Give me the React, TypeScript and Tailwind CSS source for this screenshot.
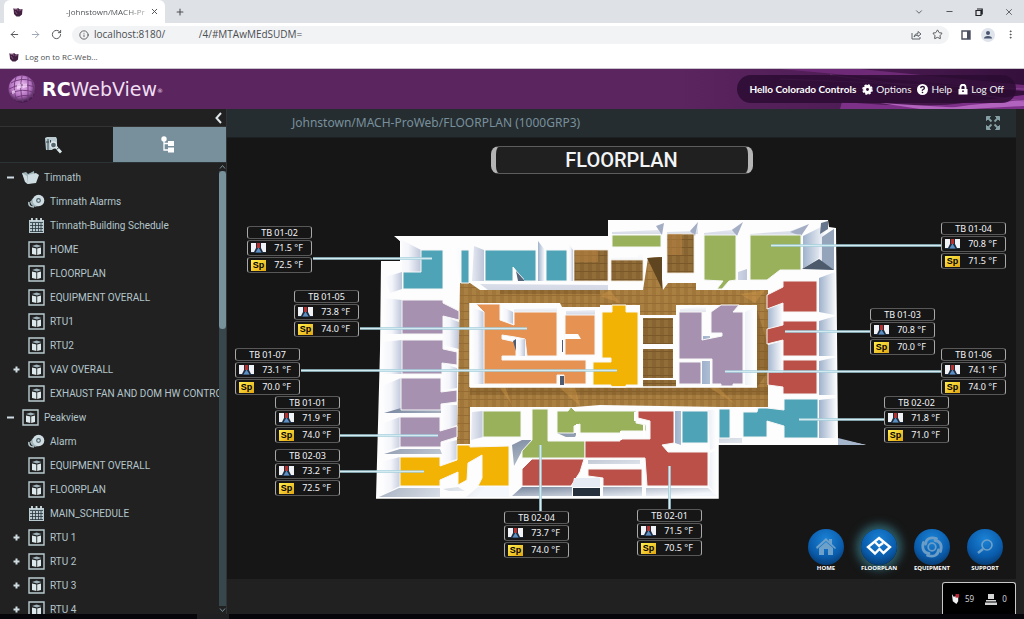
import type { ReactNode } from "react";
import {
  ArrowLeft,
  ArrowRight,
  ChevronDown,
  Info,
  Minus,
  MoreVertical,
  Plus,
  RotateCw,
  Star,
  X,
} from "lucide-react";

type IconKind = "folder" | "alarm" | "schedule" | "page";

interface TreeItem {
  label: string;
  icon: IconKind;
  level: 0 | 1;
  toggle?: "open" | "closed";
}

const TREE: TreeItem[] = [
  { label: "Timnath", icon: "folder", level: 0, toggle: "open" },
  { label: "Timnath Alarms", icon: "alarm", level: 1 },
  { label: "Timnath-Building Schedule", icon: "schedule", level: 1 },
  { label: "HOME", icon: "page", level: 1 },
  { label: "FLOORPLAN", icon: "page", level: 1 },
  { label: "EQUIPMENT OVERALL", icon: "page", level: 1 },
  { label: "RTU1", icon: "page", level: 1 },
  { label: "RTU2", icon: "page", level: 1 },
  { label: "VAV OVERALL", icon: "page", level: 1, toggle: "closed" },
  { label: "EXHAUST FAN AND DOM HW CONTROL", icon: "page", level: 1 },
  { label: "Peakview", icon: "page", level: 0, toggle: "open" },
  { label: "Alarm", icon: "alarm", level: 1 },
  { label: "EQUIPMENT OVERALL", icon: "page", level: 1 },
  { label: "FLOORPLAN", icon: "page", level: 1 },
  { label: "MAIN_SCHEDULE", icon: "schedule", level: 1 },
  { label: "RTU 1", icon: "page", level: 1, toggle: "closed" },
  { label: "RTU 2", icon: "page", level: 1, toggle: "closed" },
  { label: "RTU 3", icon: "page", level: 1, toggle: "closed" },
  { label: "RTU 4", icon: "page", level: 1, toggle: "closed" },
];

interface Zone {
  name: string;
  temp: string;
  setpoint: string;
  place: string;
}

// Zone tags are pinned on the graphic, relative to its top-left corner
const ZONES: Zone[] = [
  { name: "TB 01-02", temp: "71.5 °F", setpoint: "72.5 °F", place: "left-[20px] top-[88px]" },
  { name: "TB 01-05", temp: "73.8 °F", setpoint: "74.0 °F", place: "left-[67px] top-[152px]" },
  { name: "TB 01-07", temp: "73.1 °F", setpoint: "70.0 °F", place: "left-[8px] top-[210px]" },
  { name: "TB 01-01", temp: "71.9 °F", setpoint: "74.0 °F", place: "left-[48px] top-[258px]" },
  { name: "TB 02-03", temp: "73.2 °F", setpoint: "72.5 °F", place: "left-[48px] top-[311px]" },
  { name: "TB 02-04", temp: "73.7 °F", setpoint: "74.0 °F", place: "left-[277px] top-[373px]" },
  { name: "TB 02-01", temp: "71.5 °F", setpoint: "70.5 °F", place: "left-[410px] top-[371px]" },
  { name: "TB 01-04", temp: "70.8 °F", setpoint: "71.5 °F", place: "left-[714px] top-[84px]" },
  { name: "TB 01-03", temp: "70.8 °F", setpoint: "70.0 °F", place: "left-[643px] top-[170px]" },
  { name: "TB 01-06", temp: "74.1 °F", setpoint: "74.0 °F", place: "left-[714px] top-[210px]" },
  { name: "TB 02-02", temp: "71.8 °F", setpoint: "71.0 °F", place: "left-[657px] top-[258px]" },
];

function TreeIcon({ kind }: { kind: IconKind }) {
  if (kind === "folder") {
    return (
      <svg viewBox="0 0 17 17" className="h-[17px] w-[17px] shrink-0" fill="#cfdde2">
        <path d="M0 4 L4 3 L6 5 L12 2 L13 13 L5 15 Z" fill="#9fb3ba" />
        <path d="M0 4 L5 7 L6 15 L3 13 Z" />
        <path d="M6 6 L14 4 L17 6 L14 14 L6 15 Z" />
      </svg>
    );
  }
  if (kind === "alarm") {
    return (
      <svg viewBox="0 0 17 17" className="h-[17px] w-[17px] shrink-0">
        <path d="M1 9 Q0 14 6 14 M3 8 Q3 12 8 13" fill="none" stroke="#b5c6cc" strokeWidth="1.6" />
        <ellipse cx="8" cy="9" rx="5" ry="4.5" fill="#9fb3ba" />
        <circle cx="10.5" cy="7.5" r="5.8" fill="#cfdde2" />
        <circle cx="10.5" cy="7.5" r="2.4" fill="#4d626b" />
        <circle cx="10.5" cy="7.5" r="1.2" fill="#cfdde2" />
      </svg>
    );
  }
  if (kind === "schedule") {
    return (
      <svg viewBox="0 0 17 17" className="h-[17px] w-[17px] shrink-0">
        <path d="M1 3h15v13H1z" fill="#b9cbd1" />
        <path d="M4 1v3M8.5 1v3M13 1v3" stroke="#cfdde2" strokeWidth="1.8" />
        <path
          d="M2 5.5h13M2 8.5h13M2 11.5h13M2 14.5h13M4.5 6v9M7.5 6v9M10.5 6v9M13 6v9"
          stroke="#26343a"
          strokeWidth="0.8"
        />
      </svg>
    );
  }
  return (
    <svg viewBox="0 0 17 17" className="h-[17px] w-[17px] shrink-0">
      <path d="M1 1h15v15H1z" fill="none" stroke="#b9cbd1" strokeWidth="1.4" />
      <path d="M4 5 L8.500 3.500 L13.500 5 L9 6.500 Z" fill="#9fb3ba" />
      <path d="M4 6.5 L8.300 7.5 V14 L4 13 Z M9.200 7.5 L13 6.5 V13 L9.200 14 Z" fill="#dce8ec" />
    </svg>
  );
}

function TreeToggle({ state, label }: { state?: "open" | "closed"; label: string }) {
  if (!state) return <span className="w-[15px] shrink-0" />;
  return (
    <button type="button" aria-label={`Toggle ${label}`} className="flex w-[15px] shrink-0 items-center">
      <svg viewBox="0 0 7 7" className="h-[7px] w-[7px]" stroke="#cfdde2" strokeWidth="2">
        <path d={state === "open" ? "M0 3.5h7" : "M0.500 3.5h6M3.5 0.500v6"} />
      </svg>
    </button>
  );
}

function Favicon() {
  return (
    <svg viewBox="0 0 10 10" className="h-[10px] w-[10px] shrink-0">
      <path d="M0.500 1.500 3 2.500 5 1 7 2.500 9.500 2 9 7.500 6.500 9.500h-3L1 7Z" fill="#42203f" />
      <path d="M0 2h4l1 2M9 2.5 6 4M2 4l2 3" stroke="#8b5a86" strokeWidth="0.8" fill="none" />
    </svg>
  );
}

function BrowserChrome() {
  return (
    <div className="shrink-0 bg-white font-['Open_Sans',sans-serif] text-[10px] text-[#4a4d51]">
      <div className="flex h-[23px] items-center bg-[#dee1e6] pl-1">
        <div className="flex h-full w-[161px] items-center rounded-t-md bg-white pr-1.5 pl-[9px]">
          <Favicon />
          <span className="ml-[43px] flex-1 whitespace-nowrap bg-linear-to-r from-[#4a4d51] from-70% to-[#d0d0d0] bg-clip-text text-[8px] text-transparent">
            -Johnstown/MACH-Pr
          </span>
          <button type="button" aria-label="Close tab">
            <X size={9} strokeWidth={2.5} />
          </button>
        </div>
        <button type="button" aria-label="New tab" className="ml-2.5">
          <Plus size={10} strokeWidth={2.5} />
        </button>
        <div className="ml-auto flex items-center gap-[21px] pr-[10px]">
          <ChevronDown size={10} />
          <Minus size={9} strokeWidth={2.5} />
          <svg viewBox="0 0 8 8" className="h-2 w-2" fill="none" stroke="#202124" strokeWidth="1.2">
            <path d="M1 2.5h5v5H1zM2 1h5.2v5.5" />
          </svg>
          <X size={10} />
        </div>
      </div>
      <div className="flex h-[23px] items-center">
        <div className="flex w-[72px] items-center gap-[10px] pl-[9px]">
          <ArrowLeft size={11} />
          <ArrowRight size={11} className="text-gray-400" />
          <RotateCw size={11} />
        </div>
        <div className="flex h-[18px] flex-1 items-center rounded-full bg-[#f1f3f4] pr-1.5 pl-[7px]">
          <Info size={10} />
          <input
            aria-label="Address"
            readOnly
            value={"localhost:8180/" + "\u00a0".repeat(13) + "/4/#MTAwMEdSUDM="}
            className="ml-[5px] min-w-0 flex-1 bg-transparent outline-none"
          />
          <svg viewBox="0 0 11 10" className="h-[10px] w-[11px]" fill="none" stroke="#5f6368">
            <path d="M1 3v6h8V7M3 7Q3.500 3.500 7 3.500V1.500L10 4 7 6.500V5Q4.500 5 3 7Z" />
          </svg>
          <Star size={11} className="ml-[10px]" />
        </div>
        <div className="flex items-center gap-[10px] pr-[8px] pl-[12px]">
          <svg viewBox="0 0 10 10" className="h-[10px] w-[10px]">
            <path d="M1 1h8v8H1z" fill="none" stroke="#4a5060" strokeWidth="1.4" />
            <path d="M6 1h3v8H6z" fill="#4a5060" />
          </svg>
          <svg viewBox="0 0 14 14" className="h-[14px] w-[14px]">
            <circle cx="7" cy="7" r="7" fill="#dfe3ec" />
            <circle cx="7" cy="5" r="2" fill="#47566e" />
            <path d="M3 10.5Q3 8 7 8t4 2.5Z" fill="#47566e" />
          </svg>
          <MoreVertical size={11} />
        </div>
      </div>
      <div className="flex h-[23px] items-center border-b border-[#c9c4cc] pl-[9px]">
        <a href="#bookmark" className="flex items-center gap-[6px] text-[8px]">
          <Favicon />
          Log on to RC-Web...
        </a>
      </div>
    </div>
  );
}

function Globe() {
  return (
    <svg viewBox="0 0 28 28" className="h-7 w-7">
      <defs>
        <radialGradient id="globe" cx="0.45" cy="0.38" r="0.62">
          <stop offset="0" stopColor="#f0c4f7" />
          <stop offset="0.6" stopColor="#b573c2" />
          <stop offset="1" stopColor="#3b1642" />
        </radialGradient>
      </defs>
      <circle cx="14" cy="14" r="13.5" fill="url(#globe)" />
      <g fill="none" stroke="#6e3878" strokeWidth="0.9">
        <path d="M3 8Q13 2 24 6M1 14Q13 7 27 12M2 19Q14 12 27 18M5 24Q15 18 25 22" />
        <path d="M8 2Q4 13 9 26M14 1Q11 14 15 27M20 2Q20 14 20 26M24 5Q27 13 24 22" />
      </g>
      <path d="M9 10l4-1v4l-4 1ZM15 9l4-.5V12l-4 1ZM4 16l3-1v3l-3 1Z" fill="#f8dcfc" opacity="0.7" />
    </svg>
  );
}

function Header() {
  return (
    <header className="relative flex h-10 shrink-0 items-center justify-between overflow-hidden bg-[#5b255f] pr-2 pl-2">
      <svg
        viewBox="0 0 344 40"
        preserveAspectRatio="none"
        className="absolute top-0 right-0 h-full w-[344px]"
      >
        <defs>
          <linearGradient id="streak" x1="0" x2="1">
            <stop offset="0" stopColor="#5b255f" />
            <stop offset="0.5" stopColor="#4e1c55" />
            <stop offset="1" stopColor="#35103c" />
          </linearGradient>
        </defs>
        <path d="M0 0h344v40H0z" fill="url(#streak)" />
        <path d="M100 0 L344 22 V16 L180 0Z" fill="#6e2a76" />
        <path d="M162 33 Q250 40 290 33 L344 26 V40H160Z" fill="#7d3088" />
        <path d="M200 34 L300 40 H240Z" fill="#b263bd" />
        <path d="M344 31 L290 36 L262 40 H290 L344 37Z" fill="#b263bd" />
        <path d="M100 10 L344 20M150 6 L344 32" stroke="#8d4a96" strokeWidth="0.8" />
      </svg>
      <a
        href="#home"
        className="relative flex items-center gap-[6px] font-['DejaVu_Sans',sans-serif] text-[19px] leading-7 text-[#f0dff2]"
      >
        <Globe />
        <span>
          <b className="text-white">RC</b>WebView<sup className="text-[6px]">®</sup>
        </span>
      </a>
      <nav className="relative flex h-7 items-center gap-[6px] rounded-full bg-[#2c0c32]/85 px-[12px] font-['Lato',sans-serif] text-[10px] text-gray-100">
        <b className="text-white">Hello Colorado Controls</b>
        <a href="#options" className="flex items-center gap-[3px]">
          <svg viewBox="0 0 12 12" className="h-[11px] w-[11px]">
            <circle cx="6" cy="6" r="3.2" fill="none" stroke="white" strokeWidth="3.2" />
            <circle cx="6" cy="6" r="5" fill="none" stroke="white" strokeWidth="1.6" strokeDasharray="2.4 1.5" />
          </svg>
          Options
        </a>
        <a href="#help" className="flex items-center gap-[3px]">
          <svg viewBox="0 0 11 11" className="h-[11px] w-[11px]">
            <circle cx="5.5" cy="5.5" r="5.5" fill="white" />
            <path d="M3.6 4.2Q3.8 2.5 5.6 2.5T7.4 4.1Q7.4 5 6.2 5.5T5.5 6.9" fill="none" stroke="#2c0c32" strokeWidth="1.3" />
            <circle cx="5.5" cy="8.5" r="0.8" fill="#2c0c32" />
          </svg>
          Help
        </a>
        <a href="#logoff" className="flex items-center gap-[3px]">
          <svg viewBox="0 0 10 11" className="h-[11px] w-[10px]">
            <path d="M2.5 5V3.2a2.5 2.5 0 0 1 5 0V5" fill="none" stroke="white" strokeWidth="1.9" />
            <path d="M0.5 5h9v5.5h-9z" fill="white" />
            <circle cx="5" cy="7.2" r="0.9" fill="#2c0c32" />
          </svg>
          Log Off
        </a>
      </nav>
    </header>
  );
}

function Sidebar() {
  return (
    <aside className="flex w-[226px] shrink-0 flex-col bg-[#212121] font-['Roboto',sans-serif] text-[10px] text-[#b4c6cc]">
      <div className="flex h-[17px] shrink-0 items-center justify-end pr-1">
        <button type="button" aria-label="Collapse panel">
          <svg viewBox="0 0 7 12" className="h-3 w-[7px]" fill="none" stroke="#dfe7ea" strokeWidth="2">
            <path d="M6 1 1.5 6 6 11" />
          </svg>
        </button>
      </div>
      <div className="grid h-9 shrink-0 grid-cols-2 border-t border-[#333]">
        <button type="button" aria-label="Search" className="flex items-center justify-center bg-[#1e1e1e] pr-2">
          <svg viewBox="0 0 18 18" className="h-[18px] w-[18px]">
            <path d="M1 2 3 1h9l1 2v6l-5 5H2Z" fill="#b9cbd1" />
            <path d="M4 3v11M6.5 4v3M2 6h3" stroke="#37474f" strokeWidth="1" />
            <circle cx="9.500" cy="9" r="3" fill="#55666d" stroke="#dce8ec" strokeWidth="1.3" />
            <path d="m12 11 5 5.500" stroke="#dce8ec" strokeWidth="2.8" />
            <path d="m12.500 13.500 2.500-2" stroke="#26343a" strokeWidth="0.9" />
          </svg>
        </button>
        <button type="button" aria-label="Tree" className="flex items-center justify-center bg-[#78909c] pr-1">
          <svg viewBox="0 0 14 17" className="h-[17px] w-[14px]" fill="white">
            <circle cx="3" cy="3" r="2.7" />
            <path d="M7 5h6v5H7zM7 11.500h6v5H7z" />
            <path d="M3 4v10h4M3 7.500h4" fill="none" stroke="white" strokeWidth="1.3" />
          </svg>
        </button>
      </div>
      <div className="flex min-h-0 flex-1 border-t border-[#2b3337]">
        <ul className="min-w-0 flex-1 overflow-hidden pt-[2px]">
          {TREE.map((item, i) => (
            <li
              key={i}
              className={`flex h-6 items-center ${item.level === 0 ? "pl-[7px]" : "pl-[13px]"}`}
            >
              <TreeToggle state={item.toggle} label={item.label} />
              <a href="#node" className="flex items-center gap-[5px] whitespace-nowrap">
                <TreeIcon kind={item.icon} />
                {item.label}
              </a>
            </li>
          ))}
        </ul>
        <div className="flex w-[7px] shrink-0 flex-col items-center bg-[#37474b]">
          <svg viewBox="0 0 7 8" className="h-2 w-[7px] shrink-0 bg-[#212121]" fill="none" stroke="#78909c">
            <path d="m1 5.500 2.500-3L6 5.500" />
          </svg>
          <div className="h-[35%] w-full rounded-full bg-[#78929c]" />
          <svg viewBox="0 0 7 8" className="mt-auto h-2 w-[7px] shrink-0 bg-[#212121]" fill="none" stroke="#78909c">
            <path d="m1 2.500 2.500 3L6 2.500" />
          </svg>
        </div>
      </div>
    </aside>
  );
}

// Building drawing. Coordinates are those of the full graphic, offset by the viewBox.
function Building() {
  return (
    <svg viewBox="227 138 789 441" className="absolute inset-0 h-[441px] w-[789px]">
      <defs>
        <pattern id="wood" width="8" height="8" patternUnits="userSpaceOnUse">
          <path d="M0 0h8v8H0z" fill="#a0763a" />
          <path d="M0 0h4v8H0z" fill="#aa8042" />
          <path d="M0 7h8v1H0z" fill="#956c34" />
        </pattern>
        <pattern id="darkwood" width="8" height="8" patternUnits="userSpaceOnUse">
          <path d="M0 0h8v8H0z" fill="#876432" />
          <path d="M0 0h4v8H0z" fill="#916d38" />
          <path d="M0 7h8v1H0z" fill="#7a5829" />
        </pattern>
        <linearGradient id="shadeR" x1="0" x2="1">
          <stop offset="0" stopColor="#ffffff" />
          <stop offset="0.5" stopColor="#f4f5fa" />
          <stop offset="1" stopColor="#bdc5d9" />
        </linearGradient>
        <linearGradient id="shadeL" x1="0" x2="1">
          <stop offset="0" stopColor="#9fb2cc" />
          <stop offset="1" stopColor="#ffffff" />
        </linearGradient>
        <linearGradient id="shadeB" x1="0" x2="1" y1="0" y2="0.6">
          <stop offset="0" stopColor="#75849c" />
          <stop offset="1" stopColor="#f4f7fb" />
        </linearGradient>
        <linearGradient id="shadeT" x1="0" y1="0" x2="0" y2="1">
          <stop offset="0" stopColor="#ffffff" />
          <stop offset="1" stopColor="#d3d8e5" />
        </linearGradient>
      </defs>

      <path
        d="M394 236H608V220H828L829 227L836 228L838 439L866 445H718V498H376L380 350L381 261H400V241Z"
        fill="#fdfdfe"
      />

      {/* Wall shading */}
      <g fill="url(#shadeR)">
        <path d="M396 237L421 250V272H402V243Z" />
        <path d="M385 277L402 272V289L390 293ZM383 298L402 300V334H382Z" />
        <path d="M383 342L402 340V374H382ZM382 386L401 378V410L384 413ZM381 424L400 417V447L384 452ZM380 462L400 457V486L384 494Z" />
        <path d="M443 316L459 322V349L443 345ZM442 363L457 368V388L442 390ZM441 405L457 405V425L441 431ZM440 444L457 440V459L440 464Z" />
        <path d="M452 248H460V278ZM474 246L484 250V281H472ZM471 306H484V384H472ZM472 412L483 411V437L471 440Z" />
        <path d="M568 242L573 250V281H569Z" />
        <path d="M738 272L747 269V280H738ZM696 225L701 235V273H696Z" />
      </g>
      <g fill="url(#shadeL)">
        <path d="M767 309L782 303V325L768 329ZM768 345L783 341V372H768Z" />
        <path d="M819 278L835 272V315L819 312ZM819 321L836 316V356H819ZM819 361L837 357V395H819ZM819 400L837 398V438H819Z" />
        <path d="M803 236L827 224L819 258L803 269Z" />
        <path d="M708 410H717V447L710 450ZM710 453L717 450V496L709 486ZM675 411L681 411V445L675 443Z" />
        <path d="M523 446L531 441V451H523Z" />
      </g>
      <g fill="url(#shadeB)">
        <path d="M384 413L401 408H441V413ZM384 454L400 449H440L442 454ZM379 497L399 488H440V497ZM443 489L458 487L465 491H449ZM466 497L478 487H509V497Z" />
        <path d="M512 496L522 487H572V496ZM646 488H708L717 496H646ZM603 487H642V496H603Z" />
        <path d="M557 433L566 437H575L577 433ZM588 460H640V464H588ZM719 438H742V443H719ZM512 445L522 440L532 440L522 451L514 466Z" />
      </g>
      <g fill="url(#shadeT)">
        <path d="M612 232L658 230L664 223L661 234H612ZM667 232L694 231L698 222V234H667ZM704 233L731 230L742 222L736 235H704ZM750 234L790 231L809 224L801 235H750Z" />
        <path d="M611 258L637 257L643 251V260H611ZM480 284L608 285V290H488Z" />
      </g>
      <path d="M821 223L828 221V229L820 234Z" fill="#68768d" />
      <path d="M802 269L819 259L820 238L834 229V270Z" fill="url(#shadeR)" />
      <path d="M822 237L834 229V270L822 262Z" fill="#93a4bb" />
      <path d="M802 269L819 259L834 270Z" fill="#4c5a6c" />
      <path d="M838 438L866 445H838Z" fill="#a6b6cc" />
      <path d="M656 226L664 223L662 235ZM690 231L698 222L695 236ZM732 230L743 222L737 236ZM790 232L809 224L801 236Z" fill="#a3adc4" />

      {/* Corridors */}
      <path
        d="M460 283H470L480 290H643L648 258L660 257L663 290L668 283H696V290H768V407H757L720 407L600 405L575 407L560 407L470 407V444H457Z"
        fill="url(#wood)"
      />
      <path d="M647 258L662 257V289L652 268Z" fill="#5f4520" />
      <path d="M470 387H768V395H470ZM500 290H600V294H500ZM757 310L768 345V372L757 387Z" fill="#6b4a1e" opacity="0.35" />
      <path d="M575 387L580 406L560 388ZM710 388L735 404L718 387ZM765 290L740 294L755 303ZM610 290L620 303L600 296ZM500 388L512 405L505 387Z" fill="#d49a4a" opacity="0.4" />
      <g fill="url(#darkwood)" stroke="#efe7da" strokeWidth="0.8">
        <path d="M574 250H608V281H574ZM611 260H643V281H611ZM667 234H694V273H667Z" />
      </g>
      <path d="M575 250H598V262H575ZM668 234H682V255H668Z" fill="#bd8544" opacity="0.5" />

      {/* Inner blocks */}
      <path d="M470 303H560L562 307H600V305H757V387H470Z" fill="#fdfdfe" />
      <path d="M471 307L484 312V384H472Z" fill="url(#shadeR)" />
      <path d="M745 312L755 307V385H745ZM703 341H710V336H703ZM702 361H710V384H702Z" fill="url(#shadeL)" />
      <path d="M501 306L513 312V324L501 319Z" fill="url(#shadeR)" />
      <path d="M514 309L557 308V312H514ZM566 311L595 310V315H566ZM680 309L706 306V312H680Z" fill="url(#shadeT)" />
      <path d="M640 305H676V315H640Z" fill="url(#wood)" />
      <path d="M643 318H673V344H643ZM643 349H673V378H643ZM643 380H676V387H643Z" fill="url(#darkwood)" />

      <g stroke="#f7f7f7" strokeWidth="1">
        <g fill="#4fa3b7">
          <path d="M421 250H443V289H403V272H421Z" />
          <path d="M461 250H469V283H461ZM485 250H536V281H524L513 267V281H485ZM546 250H567V281H546Z" />
          <path d="M784 399H818V438H784V426L767 421V437H743V412H757L758 408H767L784 410Z" />
          <path d="M719 409H730V438H719ZM682 411H708V443H682Z" />
        </g>
        <g fill="#a691b1">
          <path d="M402 300H443V303L459 311V320L443 316V334H402Z" />
          <path d="M402 340H443V349L457 352V365L442 363V374H402Z" />
          <path d="M401 378H441V392L457 390V402L441 404V410H401Z" />
          <path d="M400 417H440V431L457 426V437L441 442V447H400Z" />
          <path d="M679 312H702V340L722 336V333H711V312L721 305H739L733 312H743V384H733V386H721V384H712V359H679ZM679 362H701V384H679Z" />
        </g>
        <g fill="#98b15a">
          <path d="M612 235H661V247H612ZM704 235H736V280L729 281L722 289H717L723 281L704 280ZM750 235H801V270H780L767 280H750Z" />
          <path d="M483 411H521V437H483ZM532 409H548V441H585V458H522V451L532 440Z" />
          <path d="M557 411H568L571 407L575 411H636V423L646 425V431H621V433H580V424L574 426V433H557Z" />
        </g>
        <g fill="#bb5048">
          <path d="M783 281H817V312H783V303L767 309V295L783 287ZM783 321H817V356H783V340L767 344V329L783 325Z" />
          <path d="M783 360H817V394H783V387L768 385V372H783Z" />
          <path d="M532 459H584L580 472L571 486H522V469Z" />
          <path d="M585 441H620V439H650V421L638 418V411H674V443L662 445L668 452H708V486H647L645 458H585ZM588 469H642V486H603V478L588 476Z" />
        </g>
        <g fill="#f2b305">
          <path d="M400 457H440V466L457 460V445H470V447L509 446V486H478L482 478V455L468 463L467 480L458 485V472L440 480V486H400Z" />
          <path d="M602 312H612V305H626V312H638V385H626V387H611V385H593V362H611V358H602Z" />
        </g>
        <g fill="#e69252">
          <path d="M476 304H500V320L514 325V312H557V356H527L525 339L515 337L502 335V339L516 342V356H502V360H586V384H564V375H557V384H484V312Z" />
          <path d="M565 315H595V355H565Z" />
        </g>
      </g>

      {/* Partitions and dark gaps */}
      <path d="M515 340L525 339V356H518Z" fill="url(#shadeR)" />
      <path d="M513 267L524 279V281H513Z" fill="#ffffff" />
      <path d="M516 271L524 280V281H518Z" fill="#56667c" />
      <path d="M538 241L545 250V281H538Z" fill="url(#shadeL)" />
      <path d="M513 341L516 339V351ZM560 376H564V385H560ZM562 340H563V352H562Z" fill="#4e5b70" />
      <path d="M565 334H578L581 339H565Z" fill="#ffffff" />
      <path d="M573 488H600V496H573Z" fill="#26303d" />
      <path d="M572 487L574 478H600V487Z" fill="#e6ebf3" />
      <path d="M644 425V438M621 431V440M577 424V436M635 412V421" stroke="#ffffff" strokeWidth="2" fill="none" />
      <path d="M470 387H757M470 303V387M376 498H718V445" stroke="#ffffff" strokeWidth="1.5" fill="none" />

      {/* Leader lines */}
      <path
        d="M313 258.500H432M360 328.500H527M301 370.500H617M340 435.500H438M340 471.500H424M540.500 445V512M669.500 466V509M771 245.500H941M785 331.500H871M725 371.500H941M799 419.500H884"
        stroke="#a5d0dd"
        strokeWidth="2.6"
      />
      <path
        d="M313 258.500H432M360 328.500H527M301 370.500H617M340 435.500H438M340 471.500H424M540.500 445V512M669.500 466V509M771 245.500H941M785 331.500H871M725 371.500H941M799 419.500H884"
        stroke="#d3eaf0"
        strokeWidth="1"
      />
    </svg>
  );
}

function ZoneTag({ zone }: { zone: Zone }) {
  const frame = "flex items-center rounded-[3px] border border-x-[#a8a8a8] border-y-[#585858] bg-[#161616]";
  return (
    <div className={`absolute flex w-[65px] flex-col gap-px text-[9px] leading-3 text-gray-100 ${zone.place}`}>
      <div className={`${frame} h-[13px] justify-center`}>{zone.name}</div>
      <div className={`${frame} h-4 pl-[3px]`}>
        <svg viewBox="0 0 15 10" className="h-[10px] w-[15px]">
          <path d="M0 0h15v10H0z" fill="#1f2c3f" />
          <path d="M0 0h5v5L3 9H0zM10 0h5v9h-3L10 5z" fill="#f0f2f5" />
          <path d="M6 0h3v5H6z" fill="#b8302c" />
          <path d="M7.500 4.500 10.500 9.500H4.500Z" fill="#5c8fc4" />
        </svg>
        <span className="flex-1 text-center">{zone.temp}</span>
      </div>
      <div className={`${frame} h-4 pl-[3px]`}>
        <span className="h-[11px] w-[15px] bg-linear-to-br from-[#fff04a] to-[#e2a50c] text-center font-['Liberation_Sans',sans-serif] font-bold leading-[11px] text-black">
          Sp
        </span>
        <span className="flex-1 text-center">{zone.setpoint}</span>
      </div>
    </div>
  );
}

function NavOrb({ label, active, children }: { label: string; active?: boolean; children: ReactNode }) {
  return (
    <button type="button" className="flex w-[52px] flex-col items-center text-[6px] font-bold leading-[6px] text-white">
      <span
        className={`flex h-9 w-9 items-center justify-center rounded-full bg-[radial-gradient(circle_at_50%_30%,#1b83d6,#0a5cac_55%,#05284f)] ${
          active ? "shadow-[0_0_8px_5px_#2d5c66]" : ""
        }`}
      >
        <svg viewBox="0 0 28 28" className="h-7 w-7">
          {children}
        </svg>
      </span>
      {label}
    </button>
  );
}

function Graphic() {
  return (
    <div className="relative h-[441px] overflow-hidden bg-[#161616] font-['Noto_Sans',sans-serif]">
      <h1 className="mx-auto mt-2 flex h-7 w-[262px] items-center justify-center rounded-lg border-x-[5px] border-y border-x-[#b5b5b5] border-y-[#5c5c5c] bg-[#202020] font-['Roboto',sans-serif] text-[20px] font-medium leading-6 text-gray-100">
        FLOORPLAN
      </h1>
      <Building />
      {ZONES.map((zone) => (
        <ZoneTag key={zone.name} zone={zone} />
      ))}
      <div className="absolute top-[391px] right-[5px] flex gap-px">
        <NavOrb label="HOME">
          <path
            fillRule="evenodd"
            d="M4 14 14 5l3 3V6h3v5l4 4-1 1-9-8-9 8ZM7 15l7-6 7 6v7H7ZM12 16v6h4v-6Z"
            fill="#6ea1c9"
          />
        </NavOrb>
        <NavOrb label="FLOORPLAN" active>
          <path
            d="M14 5 25 14 18.500 20 14.500 16 10 20.500 3 14ZM10 9l4 4 4-3"
            fill="none"
            stroke="white"
            strokeWidth="2.400"
          />
        </NavOrb>
        <NavOrb label="EQUIPMENT">
          {/* Four fan blades around an open hub */}
          <g fill="none" stroke="#6b9dc6" strokeWidth="2.800" strokeLinecap="round">
            <circle cx="14" cy="14" r="3.800" strokeWidth="1.800" />
            <path d="M7.500 11C8 6 12 3.500 18.500 5.500" />
            <path d="M17 7.500C22 8 24.500 12 22.500 18.500" />
            <path d="M20.500 17C20 22 16 24.500 9.500 22.500" />
            <path d="M11 20.500C6 20 3.500 16 5.500 9.500" />
          </g>
        </NavOrb>
        <NavOrb label="SUPPORT">
          <g fill="none" stroke="#6ea1c9" strokeWidth="1.6">
            <circle cx="16" cy="12" r="5" />
            <path d="m12 16-5 4" strokeWidth="2.4" />
          </g>
        </NavOrb>
      </div>
    </div>
  );
}

function StatusBox() {
  return (
    <div className="flex h-8 w-[74px] items-center gap-[5px] rounded-t-[3px] border border-b-0 border-[#c8c8c8] bg-black pl-2 font-['Noto_Sans',sans-serif] text-[8px] text-gray-300">
      <svg viewBox="0 0 10 13" className="h-3 w-[9px]">
        <path d="M1 1l2 3 5-1v6l-2 3-4-3Z" fill="#f2f2f2" />
        <path d="M5 1h4v4H5z" fill="#b8283a" />
      </svg>
      59
      <svg viewBox="0 0 12 12" className="ml-[6px] h-3 w-3" fill="#d5d5d5">
        <path d="M3 1h6v5H3zM1 7h10v1.500H1zM0 9.500h12V12H0z" />
      </svg>
      0
    </div>
  );
}

export default function App() {
  return (
    <div className="flex h-screen flex-col overflow-hidden bg-[#212121]">
      <BrowserChrome />
      <Header />
      <div className="flex min-h-0 flex-1">
        <Sidebar />
        <main className="flex min-w-0 flex-1 flex-col border-l border-[#2f3537] pr-2">
          <div className="flex h-[29px] shrink-0 items-center justify-between border-b border-[#1d2022] bg-[#262d30] pr-[15px] pl-[65px] font-['Noto_Sans',sans-serif] text-[12px] text-[#78909c]">
            <span>Johnstown/MACH-ProWeb/FLOORPLAN (1000GRP3)</span>
            <button type="button" aria-label="Full screen">
              <svg viewBox="0 0 16 16" className="h-4 w-4" fill="#86a0a6" stroke="#86a0a6">
                <path d="M1.500 1.500h4l-4 4ZM14.500 1.500h-4l4 4ZM1.500 14.500h4l-4-4ZM14.500 14.500h-4l4-4Z" />
                <path d="m3 3 3.500 3.500M13 3 9.500 6.500M3 13l3.500-3.500M13 13 9.500 9.500" strokeWidth="1.800" />
              </svg>
            </button>
          </div>
          <Graphic />
          <div className="mt-auto flex justify-end">
            <StatusBox />
          </div>
        </main>
      </div>
      <div className="h-[5px] shrink-0 bg-[#05050a] pl-[197px]">
        <div className="h-full w-8 bg-[#1f1f22]" />
      </div>
    </div>
  );
}
